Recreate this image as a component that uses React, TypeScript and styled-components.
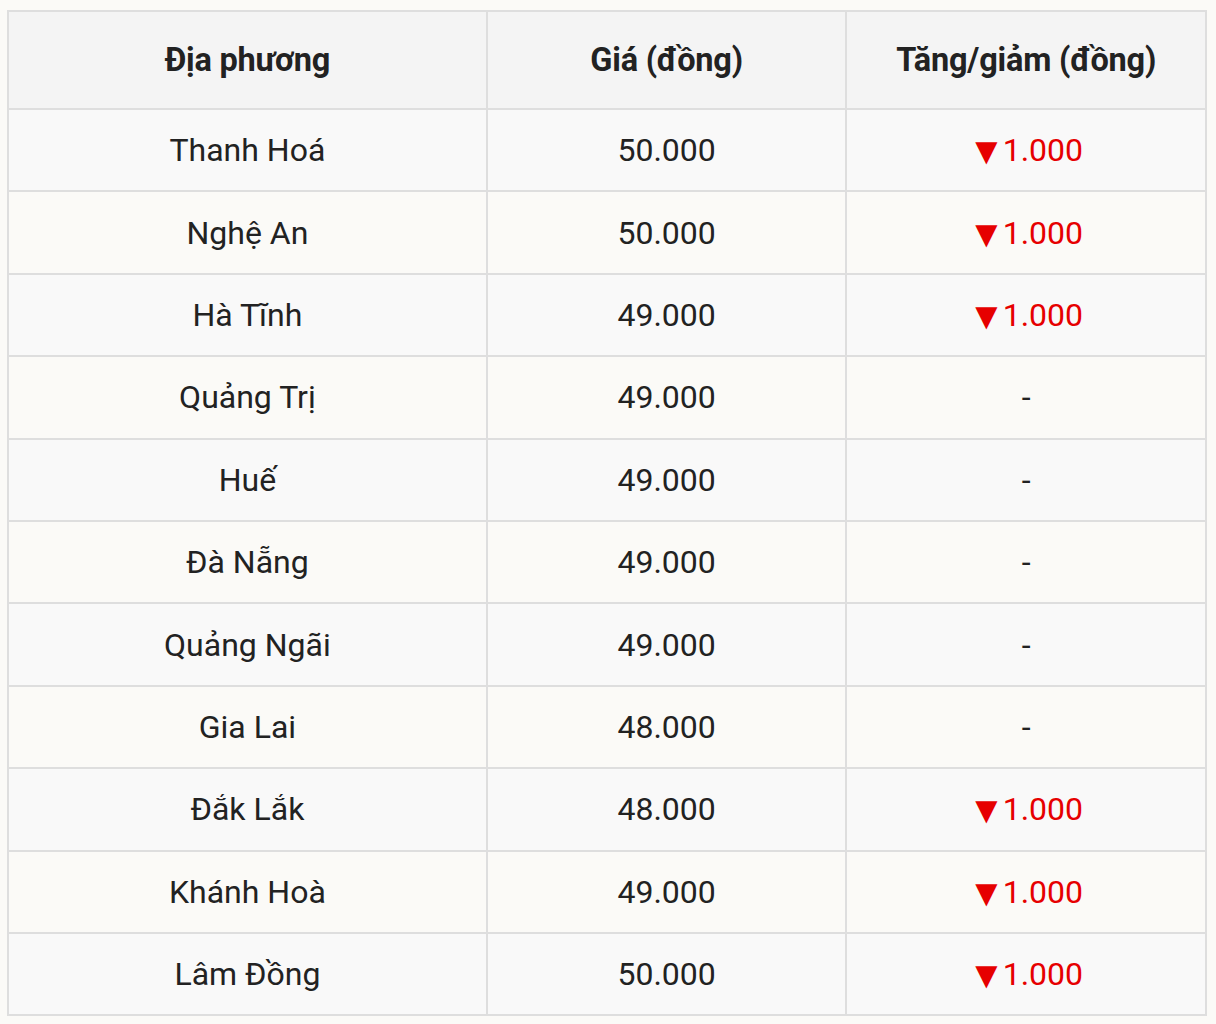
import React from 'react';
import styled, {createGlobalStyle} from 'styled-components';

type Row = {place: string; price: string; change?: string};

const rows: Row[] = [
    {place: 'Thanh Hoá', price: '50.000', change: '1.000'},
    {place: 'Nghệ An', price: '50.000', change: '1.000'},
    {place: 'Hà Tĩnh', price: '49.000', change: '1.000'},
    {place: 'Quảng Trị', price: '49.000'},
    {place: 'Huế', price: '49.000'},
    {place: 'Đà Nẵng', price: '49.000'},
    {place: 'Quảng Ngãi', price: '49.000'},
    {place: 'Gia Lai', price: '48.000'},
    {place: 'Đắk Lắk', price: '48.000', change: '1.000'},
    {place: 'Khánh Hoà', price: '49.000', change: '1.000'},
    {place: 'Lâm Đồng', price: '50.000', change: '1.000'},
];

const GlobalStyle = createGlobalStyle`
    body {
        margin: 0;
        background: #fbfaf7;
        font-family: Roboto, "Liberation Sans", sans-serif;
        color: #222;
    }
`

const Wrapper = styled.div`
    padding: 10px 9px 0 7px;
`

const Table = styled.table`
    width: 100%;
    border-collapse: collapse;
    border: 2px solid #dedede;
    table-layout: fixed;
`

const HeadCell = styled.th<{width: string}>`
    width: ${props => props.width};
    height: 96px;
    padding: 0;
    background: #f4f4f4;
    border: 2px solid #dedede;
    font-size: 32.5px;
    font-weight: 700;
    color: #222;
    text-align: center;
    letter-spacing: -0.2px;
`

const BodyRow = styled.tr`
    background: #fbfaf7;

    &:nth-child(odd) {
        background: #f9f9f9;
    }
`

const Cell = styled.td`
    height: 80.4px;
    padding: 0;
    border: 2px solid #dedede;
    font-size: 32px;
    font-weight: 400;
    text-align: center;
    color: #222;
`

const Down = styled.span`
    display: inline-block;
    padding-left: 6px;
    color: #e60000;
`

const Arrow = styled.span`
    font-family: "DejaVu Sans", sans-serif;
    font-size: 29px;
    margin-right: 5px;
`

export default function App() {
    return (
        <Wrapper>
            <GlobalStyle/>
            <Table>
                <thead>
                <tr>
                    <HeadCell width={'40%'}>Địa phương</HeadCell>
                    <HeadCell width={'30%'}>Giá (đồng)</HeadCell>
                    <HeadCell width={'30%'}>Tăng/giảm (đồng)</HeadCell>
                </tr>
                </thead>
                <tbody>
                {rows.map(row => (
                    <BodyRow key={row.place}>
                        <Cell>{row.place}</Cell>
                        <Cell>{row.price}</Cell>
                        <Cell>{row.change ? <Down><Arrow>▼</Arrow>{row.change}</Down> : '-'}</Cell>
                    </BodyRow>
                ))}
                </tbody>
            </Table>
        </Wrapper>
    );
}
